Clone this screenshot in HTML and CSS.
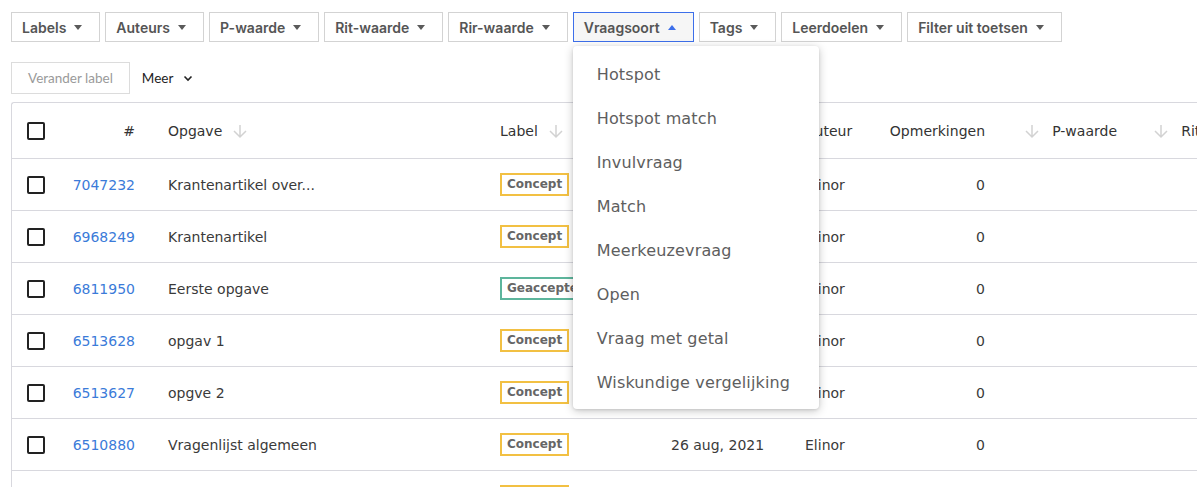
FILE: index.html
```html
<!DOCTYPE html>
<html lang="nl">
<head>
<meta charset="utf-8">
<title>Opgaven</title>
<link rel="stylesheet" href="styles.css">
</head>
<body>
<div class="page">
  <div class="filters">
    <button class="filter">Labels <span class="caret"></span></button>
    <button class="filter">Auteurs <span class="caret"></span></button>
    <button class="filter">P-waarde <span class="caret"></span></button>
    <button class="filter">Rit-waarde <span class="caret"></span></button>
    <button class="filter">Rir-waarde <span class="caret"></span></button>
    <div class="filter-wrap">
      <button class="filter active">Vraagsoort <span class="caret up"></span></button>
      <ul class="menu">
        <li>Hotspot</li>
        <li>Hotspot match</li>
        <li>Invulvraag</li>
        <li>Match</li>
        <li>Meerkeuzevraag</li>
        <li>Open</li>
        <li>Vraag met getal</li>
        <li>Wiskundige vergelijking</li>
      </ul>
    </div>
    <button class="filter">Tags <span class="caret"></span></button>
    <button class="filter">Leerdoelen <span class="caret"></span></button>
    <button class="filter">Filter uit toetsen <span class="caret"></span></button>
  </div>

  <div class="actions">
    <button class="btn-disabled">Verander label</button>
    <button class="more">Meer
      <svg class="chev" width="10" height="8" viewBox="0 0 10 8"><path d="M1.5 2.5 L5 6 L8.5 2.5" fill="none" stroke="#222" stroke-width="1.6"/></svg>
    </button>
  </div>

  <div class="table">
    <div class="row head">
      <div class="c c1"><span class="cb"></span></div>
      <div class="c c2">#</div>
      <div class="c c3">Opgave <svg class="arr" width="16" height="16" viewBox="0 0 16 16"><path d="M8 2 V14 M2 8 L8 14 L14 8" fill="none" stroke="#d2d2d2" stroke-width="1.5"/></svg></div>
      <div class="c c4">Label <svg class="arr" width="16" height="16" viewBox="0 0 16 16"><path d="M8 2 V14 M2 8 L8 14 L14 8" fill="none" stroke="#d2d2d2" stroke-width="1.5"/></svg></div>
      <div class="c c5">Gewijzigd</div>
      <div class="c c6">Auteur</div>
      <div class="c c7">Opmerkingen</div>
      <div class="c c8"><svg class="arr left" width="16" height="16" viewBox="0 0 16 16"><path d="M8 2 V14 M2 8 L8 14 L14 8" fill="none" stroke="#d2d2d2" stroke-width="1.5"/></svg>P-waarde</div>
      <div class="c c9"><svg class="arr left" width="16" height="16" viewBox="0 0 16 16"><path d="M8 2 V14 M2 8 L8 14 L14 8" fill="none" stroke="#d2d2d2" stroke-width="1.5"/></svg>Rit-waarde</div>
    </div>

    <div class="row">
      <div class="c c1"><span class="cb"></span></div>
      <div class="c c2"><a class="id">7047232</a></div>
      <div class="c c3">Krantenartikel over...</div>
      <div class="c c4"><span class="badge concept">Concept</span></div>
      <div class="c c5">2 mrt, 2022</div>
      <div class="c c6">Elinor</div>
      <div class="c c7">0</div>
      <div class="c c8"></div>
      <div class="c c9"></div>
    </div>
    <div class="row">
      <div class="c c1"><span class="cb"></span></div>
      <div class="c c2"><a class="id">6968249</a></div>
      <div class="c c3">Krantenartikel</div>
      <div class="c c4"><span class="badge concept">Concept</span></div>
      <div class="c c5">8 feb, 2022</div>
      <div class="c c6">Elinor</div>
      <div class="c c7">0</div>
      <div class="c c8"></div>
      <div class="c c9"></div>
    </div>
    <div class="row">
      <div class="c c1"><span class="cb"></span></div>
      <div class="c c2"><a class="id">6811950</a></div>
      <div class="c c3">Eerste opgave</div>
      <div class="c c4"><span class="badge accepted">Geaccepteerd</span></div>
      <div class="c c5">7 dec, 2021</div>
      <div class="c c6">Elinor</div>
      <div class="c c7">0</div>
      <div class="c c8"></div>
      <div class="c c9"></div>
    </div>
    <div class="row">
      <div class="c c1"><span class="cb"></span></div>
      <div class="c c2"><a class="id">6513628</a></div>
      <div class="c c3">opgav 1</div>
      <div class="c c4"><span class="badge concept">Concept</span></div>
      <div class="c c5">26 aug, 2021</div>
      <div class="c c6">Elinor</div>
      <div class="c c7">0</div>
      <div class="c c8"></div>
      <div class="c c9"></div>
    </div>
    <div class="row">
      <div class="c c1"><span class="cb"></span></div>
      <div class="c c2"><a class="id">6513627</a></div>
      <div class="c c3">opgve 2</div>
      <div class="c c4"><span class="badge concept">Concept</span></div>
      <div class="c c5">26 aug, 2021</div>
      <div class="c c6">Elinor</div>
      <div class="c c7">0</div>
      <div class="c c8"></div>
      <div class="c c9"></div>
    </div>
    <div class="row">
      <div class="c c1"><span class="cb"></span></div>
      <div class="c c2"><a class="id">6510880</a></div>
      <div class="c c3">Vragenlijst algemeen</div>
      <div class="c c4"><span class="badge concept">Concept</span></div>
      <div class="c c5">26 aug, 2021</div>
      <div class="c c6">Elinor</div>
      <div class="c c7">0</div>
      <div class="c c8"></div>
      <div class="c c9"></div>
    </div>
    <div class="row">
      <div class="c c1"><span class="cb"></span></div>
      <div class="c c2"><a class="id">6510879</a></div>
      <div class="c c3">Vragenlijst</div>
      <div class="c c4"><span class="badge concept">Concept</span></div>
      <div class="c c5">26 aug, 2021</div>
      <div class="c c6">Elinor</div>
      <div class="c c7">0</div>
      <div class="c c8"></div>
      <div class="c c9"></div>
    </div>
  </div>
</div>
</body>
</html>
```

FILE: styles.css
```css
* { box-sizing: border-box; }
html, body { margin: 0; padding: 0; background: #fff; }
body { width: 1197px; height: 487px; overflow: hidden; }

.page {
  padding: 12px 0 0 11px;
  font-family: "DejaVu Sans", sans-serif;
}

/* Filter bar */
.filters {
  display: flex;
  gap: 5px;
  align-items: flex-start;
}
.filter-wrap { position: relative; }
.filter {
  display: flex;
  align-items: center;
  gap: 8px;
  height: 30px;
  padding: 0 17px 0 10px;
  border: 1px solid #d3d3d3;
  background: #fff;
  font-family: Inter, "Liberation Sans", sans-serif;
  font-weight: 600;
  font-size: 14px;
  color: #555;
  cursor: pointer;
}
.filter.active {
  border-color: #3d6fea;
  background: #f6f6f6;
}
.caret {
  width: 0; height: 0;
  border-left: 4.5px solid transparent;
  border-right: 4.5px solid transparent;
  border-top: 5px solid #5a5a5a;
}
.caret.up {
  border-top: 0;
  border-bottom: 5px solid #3d6fea;
}

/* Dropdown menu */
.menu {
  position: absolute;
  top: 34px;
  left: 0;
  z-index: 10;
  width: 246px;
  margin: 0;
  padding: 6px 0 5px;
  list-style: none;
  background: #fff;
  border-radius: 4px;
  box-shadow: 0 2px 10px rgba(0, 0, 0, 0.22), 0 1px 3px rgba(0,0,0,0.1);
}
.menu li {
  height: 44px;
  display: flex;
  align-items: center;
  padding-left: 24px;
  font-family: "DejaVu Sans", sans-serif;
  font-size: 16px;
  color: #5e5e5e;
  letter-spacing: 0.15px;
}

/* Actions row */
.actions {
  display: flex;
  align-items: center;
  gap: 12px;
  margin-top: 20px;
  height: 32px;
}
.btn-disabled {
  height: 32px;
  padding: 0 16px;
  border: 1px solid #dcdcdc;
  background: #fff;
  font-family: Lato, "Open Sans", sans-serif;
  font-size: 13.5px;
  color: #9a9a9a;
}
.more {
  display: flex;
  align-items: center;
  gap: 10px;
  border: 0;
  background: none;
  font-family: Lato, "Open Sans", sans-serif;
  font-size: 13.5px;
  color: #222;
  padding: 0;
}

/* Table */
.table {
  margin-top: 8px;
  width: 1400px;
  border-top: 1px solid #d8d8de;
  border-left: 1px solid #d8d8de;
  border-radius: 3px 0 0 0;
}
.row {
  display: grid;
  grid-template-columns: 48px 92px 332px 171px 134px 81px 131px 132px 140px;
  height: 52px;
  border-bottom: 1px solid #d8d8de;
  font-size: 14px;
  color: #3a3a3a;
}
.row.head { height: 56px; color: #333; }
.c {
  display: flex;
  align-items: center;
  padding: 0 16px;
  white-space: nowrap;
  overflow: hidden;
}
.c1 { padding: 0 0 0 15px; }
.c2, .c7, .c8, .c9 { justify-content: flex-end; }
.c2 { padding-right: 17px; }
.c5 { padding-left: 16px; }

.cb {
  width: 18px; height: 18px;
  border: 2.5px solid #222;
  border-radius: 2px;
  display: block;
}
.id { color: #3b7bd9; text-decoration: none; }

.arr { margin-left: 10px; flex: none; }
.arr.left { margin-left: 0; margin-right: 12px; }

.badge {
  display: inline-block;
  padding: 2px 5px;
  border: 2px solid #f2c043;
  font-weight: bold;
  font-size: 12px;
  line-height: 15px;
  color: #666;
}
.badge.accepted { border-color: #5db59c; }
```
